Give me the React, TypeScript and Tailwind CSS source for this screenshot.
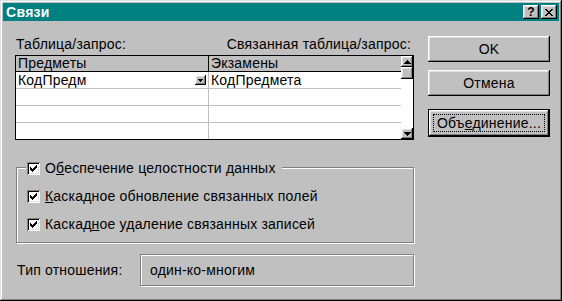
import React from 'react'

const raised =
  'shadow-[inset_-1px_-1px_0_#000,inset_1px_1px_0_#fff,inset_-2px_-2px_0_#808080,inset_2px_2px_0_#dfdfdf]'
const sunken =
  'shadow-[inset_1px_1px_0_#808080,inset_-1px_-1px_0_#fff,inset_2px_2px_0_#000,inset_-2px_-2px_0_#dfdfdf]'

function Check() {
  // 7x7 pixel check mark, like the classic one
  const cols = [
    [2, 4], [3, 5], [4, 6], [3, 5], [2, 4], [1, 3], [0, 2],
  ]
  return (
    <svg width="7" height="7" viewBox="0 0 7 7" shapeRendering="crispEdges">
      {cols.map(([a, b], i) => (
        <rect key={i} x={i} y={a} width="1" height={b - a + 1} fill="#000" />
      ))}
    </svg>
  )
}

function CheckBox() {
  return (
    <div className={`w-[13px] h-[13px] bg-white flex items-center justify-center shrink-0 ${sunken}`}>
      <Check />
    </div>
  )
}

function Arrow({ up }: { up?: boolean }) {
  return (
    <svg width="7" height="4" viewBox="0 0 7 4" shapeRendering="crispEdges">
      {up ? (
        <>
          <rect x="3" y="0" width="1" height="1" />
          <rect x="2" y="1" width="3" height="1" />
          <rect x="1" y="2" width="5" height="1" />
          <rect x="0" y="3" width="7" height="1" />
        </>
      ) : (
        <>
          <rect x="0" y="0" width="7" height="1" />
          <rect x="1" y="1" width="5" height="1" />
          <rect x="2" y="2" width="3" height="1" />
          <rect x="3" y="3" width="1" height="1" />
        </>
      )}
    </svg>
  )
}

function Row({ left, right, dropdown }: { left?: string; right?: string; dropdown?: boolean }) {
  return (
    <div className="flex h-[17px] border-b border-[#c0c0c0]">
      <div className="w-[192px] flex items-center pl-[2px] pr-[2px]">
        <span className="flex-1">{left}</span>
        {dropdown && (
          <div className={`w-[11px] h-[10px] bg-[#c0c0c0] flex items-center justify-center ${raised}`}>
            <svg width="5" height="3" viewBox="0 0 5 3" shapeRendering="crispEdges">
              <rect x="0" y="0" width="5" height="1" />
              <rect x="1" y="1" width="3" height="1" />
              <rect x="2" y="2" width="1" height="1" />
            </svg>
          </div>
        )}
      </div>
      <div className="w-px bg-[#c0c0c0]" />
      <div className="flex-1 flex items-center pl-[2px]">{right}</div>
    </div>
  )
}

export default function App() {
  return (
    <div className="w-[562px] h-[301px] bg-[#c0c0c0] p-[3px] flex flex-col text-[14px] tracking-[0.2px] text-black font-['Liberation_Sans',Arial,sans-serif] shadow-[inset_-1px_-1px_0_#000,inset_1px_1px_0_#dfdfdf,inset_-2px_-2px_0_#808080,inset_2px_2px_0_#fff]">
      {/* title bar */}
      <div className="h-[18px] bg-[#008080] flex items-center pl-[3px] pr-[2px]">
        <span className="text-white font-bold text-[14px] leading-none tracking-[0.3px]">Связи</span>
        <div className="ml-auto flex gap-[2px]">
          <div className={`w-[16px] h-[14px] bg-[#c0c0c0] flex items-center justify-center text-[12px] font-bold leading-none ${raised}`}>
            ?
          </div>
          <div className={`w-[16px] h-[14px] bg-[#c0c0c0] flex items-center justify-center ${raised}`}>
            <svg width="8" height="7" viewBox="0 0 8 7" shapeRendering="crispEdges">
              <path d="M0 0h2v1h-2zM6 0h2v1h-2zM1 1h2v1h-2zM5 1h2v1h-2zM2 2h4v1h-4zM3 3h2v1h-2zM2 4h4v1h-4zM1 5h2v1h-2zM5 5h2v1h-2zM0 6h2v1h-2zM6 6h2v1h-2z" />
            </svg>
          </div>
        </div>
      </div>

      <div className="flex flex-1">
        {/* left part */}
        <div className="ml-[12px] w-[399px] flex flex-col">
          <div className="mt-[15px] h-[19px] flex justify-between items-start leading-[16px] pl-[1px] pr-[3px]">
            <span>Таблица/запрос:</span>
            <span>Связанная таблица/запрос:</span>
          </div>

          {/* grid */}
          <div className="h-[85px] border border-black bg-white flex">
            <div className="flex-1 flex flex-col">
              <div className="flex h-[16px] bg-[#c0c0c0] border-b border-black leading-[15px]">
                <div className="w-[192px] pl-[2px]">Предметы</div>
                <div className="w-px bg-black" />
                <div className="flex-1 pl-[2px]">Экзамены</div>
              </div>
              <Row left="КодПредм" right="КодПредмета" dropdown />
              <Row />
              <Row />
              <div className="flex flex-1">
                <div className="w-[192px]" />
                <div className="w-px bg-[#c0c0c0]" />
                <div className="flex-1" />
              </div>
            </div>
            <div className="w-[12px] flex flex-col bg-white">
              <div className={`h-[11px] bg-[#c0c0c0] flex items-center justify-center ${raised}`}>
                <Arrow up />
              </div>
              <div className={`h-[12px] bg-[#c0c0c0] ${raised}`} />
              <div className="flex-1" />
              <div className={`h-[11px] bg-[#c0c0c0] flex items-center justify-center ${raised}`}>
                <Arrow />
              </div>
            </div>
          </div>

          {/* group box */}
          <div className="mt-[27px] ml-[1px] h-[76px] border border-[#808080] shadow-[inset_1px_1px_0_#fff,1px_1px_0_#fff] flex flex-col pl-[9px]">
            <div className="-mt-[8px] flex items-center gap-[5px] bg-[#c0c0c0] self-start pr-[6px] pl-px h-[16px]">
              <CheckBox />
              <span>
                О<span className="underline">б</span>еспечение целостности данных
              </span>
            </div>
            <div className="mt-[12px] flex items-center gap-[5px] h-[16px] pl-px">
              <CheckBox />
              <span>
                <span className="underline">К</span>аскадное обновление связанных полей
              </span>
            </div>
            <div className="mt-[12px] flex items-center gap-[5px] h-[16px] pl-px">
              <CheckBox />
              <span>
                Каскад<span className="underline">н</span>ое удаление связанных записей
              </span>
            </div>
          </div>

          {/* relationship type */}
          <div className="mt-[11px] flex items-center">
            <span className="w-[125px] pl-[2px]">Тип отношения:</span>
            <div className="flex-1 h-[32px] border border-[#808080] shadow-[inset_1px_1px_0_#fff,1px_1px_0_#fff] flex items-center pl-[9px]">
              один-ко-многим
            </div>
          </div>
        </div>

        {/* buttons */}
        <div className="ml-[14px] w-[122px] flex flex-col pt-[15px]">
          <div className={`h-[26px] flex items-center justify-center ${raised}`}>OK</div>
          <div className={`mt-[8px] h-[26px] flex items-center justify-center ${raised}`}>Отмена</div>
          <div className="mt-[13px] h-[28px] border border-black">
            <div className={`h-full flex items-center justify-center p-[4px] ${raised}`}>
              <div className="w-full h-full border border-dotted border-black flex items-center justify-center">
                <span>
                  Объ<span className="underline">е</span>динение...
                </span>
              </div>
            </div>
          </div>
        </div>
      </div>
    </div>
  )
}
